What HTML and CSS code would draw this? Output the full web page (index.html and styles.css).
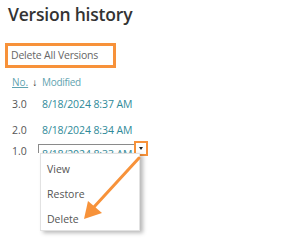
FILE: index.html
```html
<!DOCTYPE html>
<html>
<head>
<meta charset="utf-8">
<link rel="stylesheet" href="styles.css">
</head>
<body>
<div class="page">
  <h1 class="title">Version history</h1>
  <div class="delete-all">Delete All Versions</div>
  <div class="table">
    <div class="row head">
      <span class="c-no"><span class="u">No.</span><span class="sort">↓</span></span>
      <span class="c-mod">Modified</span>
    </div>
    <div class="row r1">
      <span class="c-no num">3.0</span>
      <span class="c-mod date">8/18/2024 8:37 AM</span>
    </div>
    <div class="row r2">
      <span class="c-no num">2.0</span>
      <span class="c-mod date">8/18/2024 8:34 AM</span>
    </div>
    <div class="row r3">
      <span class="c-no num">1.0</span>
      <div class="field">
        <span class="date clip">8/18/2024 8:33 AM</span>
      </div>
    </div>
  </div>
  <span class="drop"><span class="tri"></span></span>
  <div class="menu">
    <div class="item">View</div>
    <div class="item">Restore</div>
    <div class="item">Delete</div>
  </div>
  <svg class="arrow" width="300" height="247" viewBox="0 0 300 247">
    <line x1="139" y1="158" x2="94" y2="207" stroke="#f7923a" stroke-width="3" stroke-linecap="round"/>
    <polygon points="84,219 88,201 102,213" fill="#f7923a"/>
  </svg>
</div>
</body>
</html>
```
FILE: styles.css
```css
html, body {
  margin: 0;
  padding: 0;
  background: #fff;
}
.page {
  position: relative;
  width: 300px;
  height: 247px;
  overflow: hidden;
  font-family: "Open Sans", "Noto Sans", sans-serif;
}
.title {
  margin: 0;
  padding: 2px 0 0 8px;
  font-family: "Open Sans", sans-serif;
  font-size: 17.5px;
  font-weight: 600;
  font-stretch: 90%;
  letter-spacing: -0.2px;
  color: #333;
  line-height: 24px;
}
.delete-all {
  margin: 17px 0 0 5px;
  width: 102px;
  height: 19px;
  border: 3px solid #f7923a;
  font-size: 10.5px;
  line-height: 19px;
  padding-left: 3px;
  color: #666;
  letter-spacing: -0.2px;
}
.table {
  margin-top: 4px;
}
.row {
  display: flex;
  align-items: center;
  font-size: 10.5px;
}
.head { height: 20px; }
.r1 { height: 24px; }
.r2 { height: 28px; }
.r3 { height: 18px; align-items: flex-start; }
.c-no {
  width: 30px;
  padding-left: 12px;
  color: #555;
  flex: none;
}
.c-mod { color: #4d9aa8; }
.head .c-mod { font-size: 10px; letter-spacing: -0.3px; color: #5fa3b0; }
.head .c-no { color: #5fa3b0; font-size: 10px; }
.u { text-decoration: underline; }
.sort { color: #222; margin-left: 4px; font-size: 10px; font-weight: 700; }
.date { color: #2f8a99; letter-spacing: -0.1px; }
.num { color: #555; }
.r3 .c-no { width: 26px; line-height: 14px; }
.field {
  width: 110px;
  height: 9px;
  overflow: hidden;
  border-top: 1px solid #8a8a8a;
  border-left: 1px solid #8a8a8a;
  padding-left: 3px;
  box-sizing: border-box;
}
.clip {
  display: block;
  line-height: 14px;
  margin-top: 2px;
}
.drop {
  position: absolute;
  left: 134px;
  top: 141px;
  width: 10px;
  height: 11px;
  border: 2.5px solid #f7923a;
  background: #fff;
  display: flex;
  align-items: center;
  justify-content: center;
}
.tri {
  width: 0;
  height: 0;
  border-left: 2.5px solid transparent;
  border-right: 2.5px solid transparent;
  border-top: 3px solid #222;
}
.menu {
  position: absolute;
  left: 40px;
  top: 153px;
  width: 100px;
  height: 78px;
  background: #fff;
  border: 1px solid #e2e2e2;
  box-shadow: 3px 2px 4px rgba(0,0,0,0.28);
  box-sizing: border-box;
  padding-top: 3px;
}
.item {
  height: 25px;
  line-height: 25px;
  padding-left: 6px;
  font-size: 10.5px;
  color: #555;
}
.arrow {
  position: absolute;
  left: 0;
  top: 0;
}
```
